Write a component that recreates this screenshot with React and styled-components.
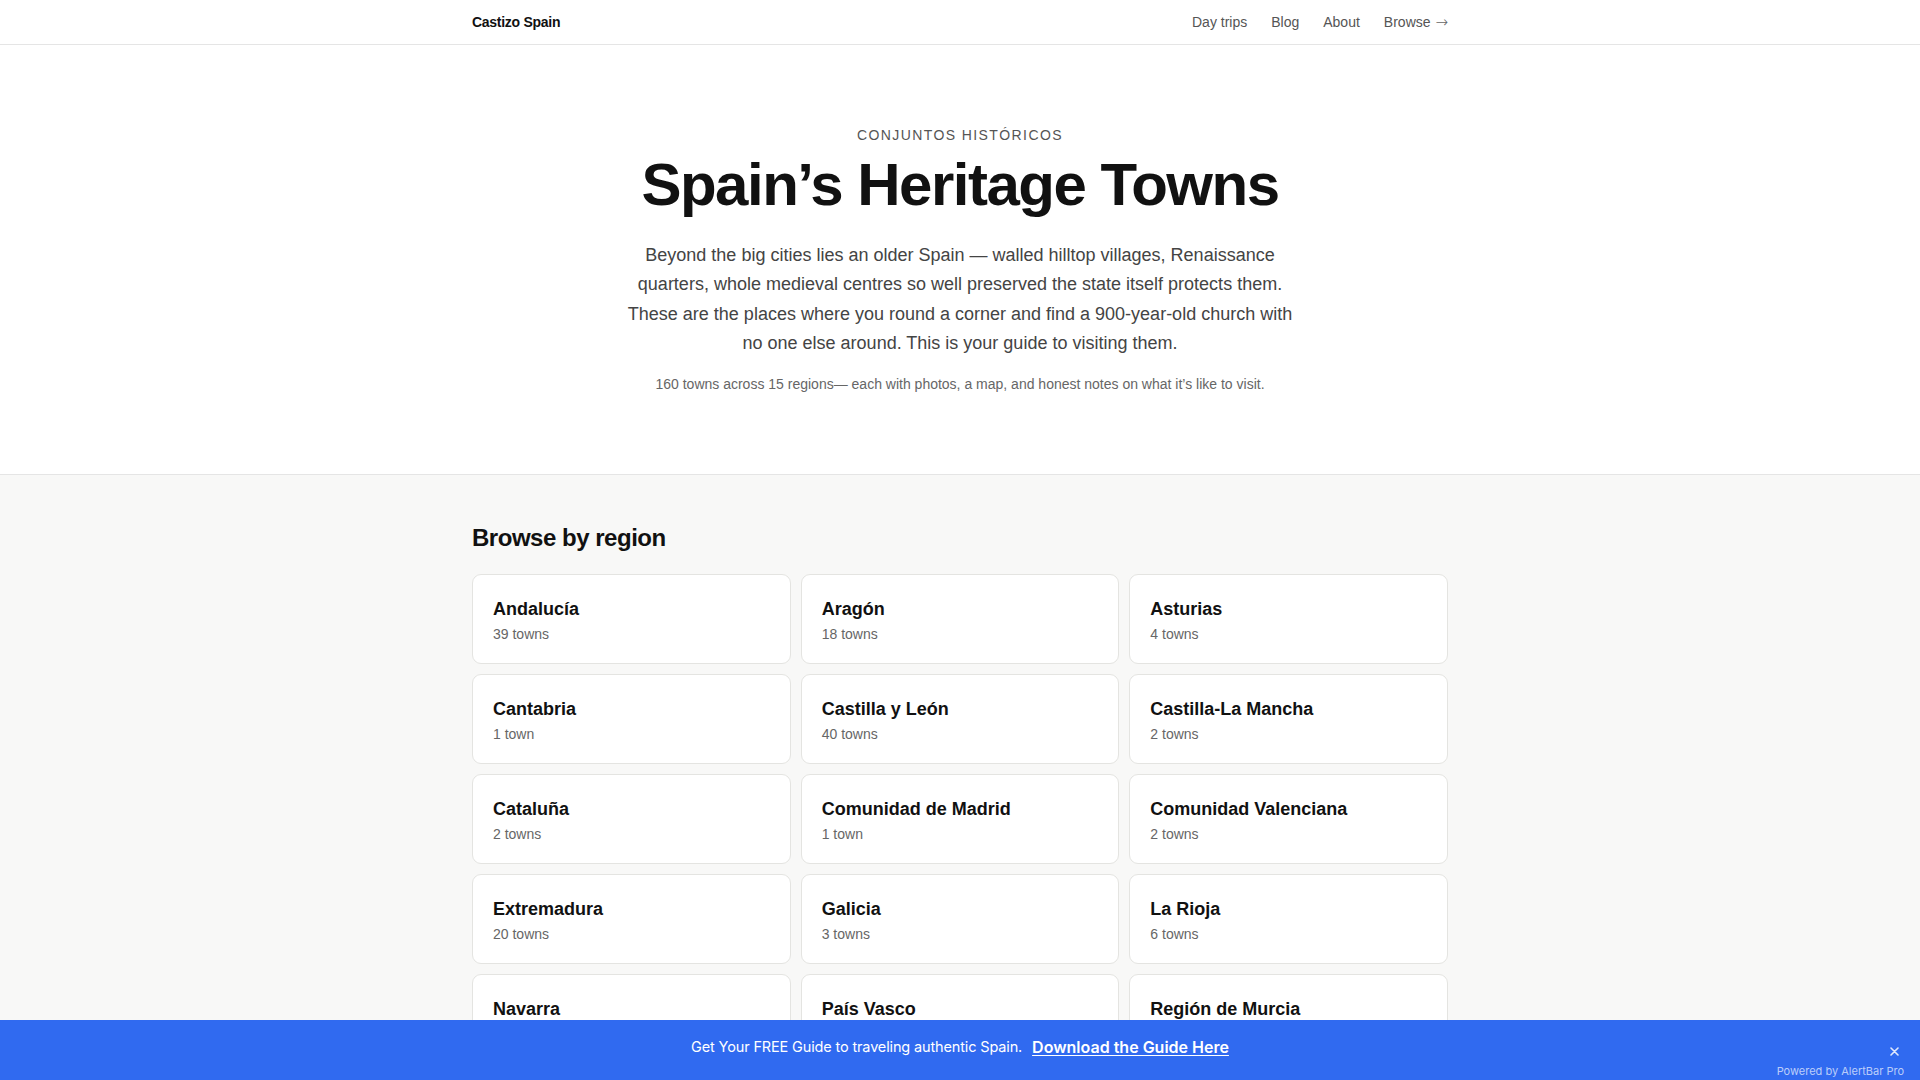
import React from "react";
import styled, { createGlobalStyle } from "styled-components";

const GlobalStyle = createGlobalStyle`
  *, *::before, *::after { box-sizing: border-box; }
  html, body { margin: 0; padding: 0; }
  body {
    font-family: "Liberation Sans", Arial, Helvetica, sans-serif;
    color: #111;
    background: #f8f8f7;
    -webkit-font-smoothing: antialiased;
  }
  a { color: inherit; text-decoration: none; }
`;

const Container = styled.div`
  max-width: 1024px;
  margin: 0 auto;
  padding: 0 24px;
`;

const Header = styled.header`
  background: #fff;
  border-bottom: 1px solid #e5e5e5;
`;

const HeaderInner = styled(Container)`
  height: 44px;
  display: flex;
  align-items: center;
  justify-content: space-between;
`;

const Logo = styled.a`
  font-size: 14px;
  font-weight: 700;
  letter-spacing: -0.02em;
  color: #111;
`;

const Nav = styled.nav`
  display: flex;
  align-items: center;
  gap: 24px;
`;

const NavLink = styled.a`
  font-size: 14px;
  line-height: 20px;
  color: #555;
`;

const Arrow = styled.span`
  font-family: "DejaVu Sans", sans-serif;
  font-weight: 300;
  font-size: 15px;
  line-height: 14px;
  margin-left: 1px;
  color: #666;
`;

const Hero = styled.section`
  background: #fff;
  border-bottom: 1px solid #e5e5e5;
  padding: 80px 24px;
  text-align: center;
`;

const Eyebrow = styled.p`
  margin: 0 0 7px;
  font-size: 14px;
  line-height: 20px;
  letter-spacing: 0.1em;
  text-transform: uppercase;
  color: #555;
`;

const Title = styled.h1`
  margin: 0 0 23px;
  font-size: 60px;
  line-height: 66px;
  font-weight: 700;
  letter-spacing: -0.025em;
  color: #111;
`;

const Lead = styled.p`
  max-width: 680px;
  margin: 0 auto;
  font-size: 18px;
  line-height: 29.4px;
  color: #444;
`;

const Note = styled.p`
  margin: 15px 0 0;
  font-size: 14px;
  line-height: 20px;
  color: #666;
`;

const Regions = styled.section`
  padding: 49px 0 140px;
`;

const SectionTitle = styled.h2`
  margin: 0 0 22px;
  font-size: 24px;
  line-height: 1.2;
  font-weight: 700;
  letter-spacing: -0.02em;
  color: #111;
`;

const Grid = styled.div`
  display: grid;
  grid-template-columns: repeat(3, 1fr);
  gap: 10px;
`;

const Card = styled.a`
  display: block;
  background: #fff;
  border: 1px solid #e4e4e1;
  border-radius: 9px;
  padding: 21px 20px 19px;
`;

const CardTitle = styled.h3`
  margin: 0 0 2px;
  font-size: 18px;
  line-height: 26px;
  font-weight: 700;
  color: #111;
`;

const CardCount = styled.p`
  margin: 0;
  font-size: 14px;
  line-height: 20px;
  color: #666;
`;

const AlertBar = styled.div`
  position: fixed;
  left: 0;
  right: 0;
  bottom: 0;
  height: 60px;
  background: #306af0;
  display: flex;
  align-items: center;
  justify-content: center;
  padding-bottom: 6px;
  font-family: Inter, "Noto Sans", sans-serif;
  color: #fff;
`;

const AlertText = styled.span`
  font-size: 14.5px;
  line-height: 20px;
  letter-spacing: -0.01em;
`;

const AlertLink = styled.a`
  margin-left: 10px;
  font-size: 16px;
  line-height: 20px;
  font-weight: 600;
  color: #fff;
  text-decoration: underline;
  text-underline-offset: 2px;
`;

const CloseButton = styled.button`
  position: absolute;
  top: 24px;
  right: 19px;
  width: 14px;
  height: 14px;
  padding: 0;
  border: 0;
  background: none;
  display: flex;
  align-items: center;
  justify-content: center;
  cursor: pointer;
  opacity: 0.85;
`;

const Powered = styled.span`
  position: absolute;
  right: 16px;
  bottom: 3px;
  font-size: 11px;
  line-height: 12px;
  color: rgba(255, 255, 255, 0.68);
`;

const regions = [
  ["Andalucía", 39],
  ["Aragón", 18],
  ["Asturias", 4],
  ["Cantabria", 1],
  ["Castilla y León", 40],
  ["Castilla-La Mancha", 2],
  ["Cataluña", 2],
  ["Comunidad de Madrid", 1],
  ["Comunidad Valenciana", 2],
  ["Extremadura", 20],
  ["Galicia", 3],
  ["La Rioja", 6],
  ["Navarra", 9],
  ["País Vasco", 8],
  ["Región de Murcia", 5],
];

export default function App() {
  return (
    <>
      <GlobalStyle />
      <Header>
        <HeaderInner>
          <Logo href="#">Castizo Spain</Logo>
          <Nav>
            <NavLink href="#">Day trips</NavLink>
            <NavLink href="#">Blog</NavLink>
            <NavLink href="#">About</NavLink>
            <NavLink href="#">
              Browse <Arrow>→</Arrow>
            </NavLink>
          </Nav>
        </HeaderInner>
      </Header>

      <Hero>
        <Eyebrow>Conjuntos Históricos</Eyebrow>
        <Title>Spain’s Heritage Towns</Title>
        <Lead>
          Beyond the big cities lies an older Spain — walled hilltop villages,
          Renaissance quarters, whole medieval centres so well preserved the
          state itself protects them. These are the places where you round a
          corner and find a 900-year-old church with no one else around. This
          is your guide to visiting them.
        </Lead>
        <Note>
          160 towns across 15 regions— each with photos, a map, and honest
          notes on what it’s like to visit.
        </Note>
      </Hero>

      <Regions>
        <Container>
          <SectionTitle>Browse by region</SectionTitle>
          <Grid>
            {regions.map(([name, count]) => (
              <Card href="#" key={name}>
                <CardTitle>{name}</CardTitle>
                <CardCount>
                  {count} {count === 1 ? "town" : "towns"}
                </CardCount>
              </Card>
            ))}
          </Grid>
        </Container>
      </Regions>

      <AlertBar>
        <AlertText>Get Your FREE Guide to traveling authentic Spain.</AlertText>
        <AlertLink href="#">Download the Guide Here</AlertLink>
        <CloseButton aria-label="Close">
          <svg width="9" height="9" viewBox="0 0 9 9" fill="none">
            <path
              d="M1 1L8 8M8 1L1 8"
              stroke="#fff"
              strokeWidth="1.6"
              strokeLinecap="round"
            />
          </svg>
        </CloseButton>
        <Powered>Powered by AlertBar Pro</Powered>
      </AlertBar>
    </>
  );
}
